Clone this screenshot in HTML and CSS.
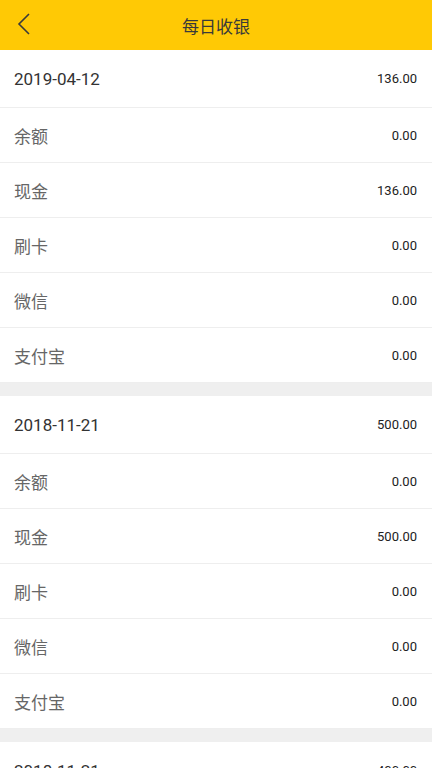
FILE: index.html
```html
<!DOCTYPE html>
<html lang="zh">
<head>
    <meta charset="UTF-8">
    <meta name="viewport" content="width=device-width, initial-scale=1.0">
    <title>每日收银</title>
    <link rel="stylesheet" href="styles.css">
</head>
<body>
    <div class="header">
        <a href="#" class="back">
            <svg width="14" height="24" viewBox="0 0 14 24">
                <path d="M12 2 L2 12 L12 22" fill="none" stroke="#3a3a3a" stroke-width="1.6"/>
            </svg>
        </a>
        <div class="title">每日收银</div>
    </div>

    <div class="list">
        <div class="day">
            <div class="row date-row"><span class="date">2019-04-12</span><span class="amount">136.00</span></div>
            <div class="row"><span class="label">余额</span><span class="amount">0.00</span></div>
            <div class="row"><span class="label">现金</span><span class="amount">136.00</span></div>
            <div class="row"><span class="label">刷卡</span><span class="amount">0.00</span></div>
            <div class="row"><span class="label">微信</span><span class="amount">0.00</span></div>
            <div class="row"><span class="label">支付宝</span><span class="amount">0.00</span></div>
        </div>
        <div class="day">
            <div class="row date-row"><span class="date">2018-11-21</span><span class="amount">500.00</span></div>
            <div class="row"><span class="label">余额</span><span class="amount">0.00</span></div>
            <div class="row"><span class="label">现金</span><span class="amount">500.00</span></div>
            <div class="row"><span class="label">刷卡</span><span class="amount">0.00</span></div>
            <div class="row"><span class="label">微信</span><span class="amount">0.00</span></div>
            <div class="row"><span class="label">支付宝</span><span class="amount">0.00</span></div>
        </div>
        <div class="day">
            <div class="row date-row"><span class="date">2018-11-21</span><span class="amount">400.00</span></div>
            <div class="row"><span class="label">余额</span><span class="amount">0.00</span></div>
        </div>
    </div>
</body>
</html>
```

FILE: styles.css
```css
body {
    margin: 0;
    font-family: Roboto, "Noto Sans CJK SC", sans-serif;
    background: #efefef;
    color: #333;
    overflow: hidden;
}

.header {
    height: 50px;
    background: #ffc905;
    display: flex;
    align-items: center;
    justify-content: center;
    position: relative;
}

.back {
    position: absolute;
    left: 17px;
    top: 12px;
    display: flex;
}

.title {
    font-size: 17px;
    color: #3a3a3a;
    font-family: "Noto Sans CJK SC", sans-serif;
}

.day {
    background: #fff;
    margin-bottom: 13px;
}

.row {
    height: 54px;
    padding: 0 15px 0 14px;
    display: flex;
    align-items: center;
    justify-content: space-between;
    border-bottom: 1px solid #eeeeee;
}

.date-row {
    height: 57px;
}

.date {
    font-size: 17px;
    color: #333;
}

.label {
    font-size: 17px;
    color: #666;
    font-family: "Noto Sans CJK SC", sans-serif;
}

.amount {
    font-size: 13px;
    color: #222;
}
```
